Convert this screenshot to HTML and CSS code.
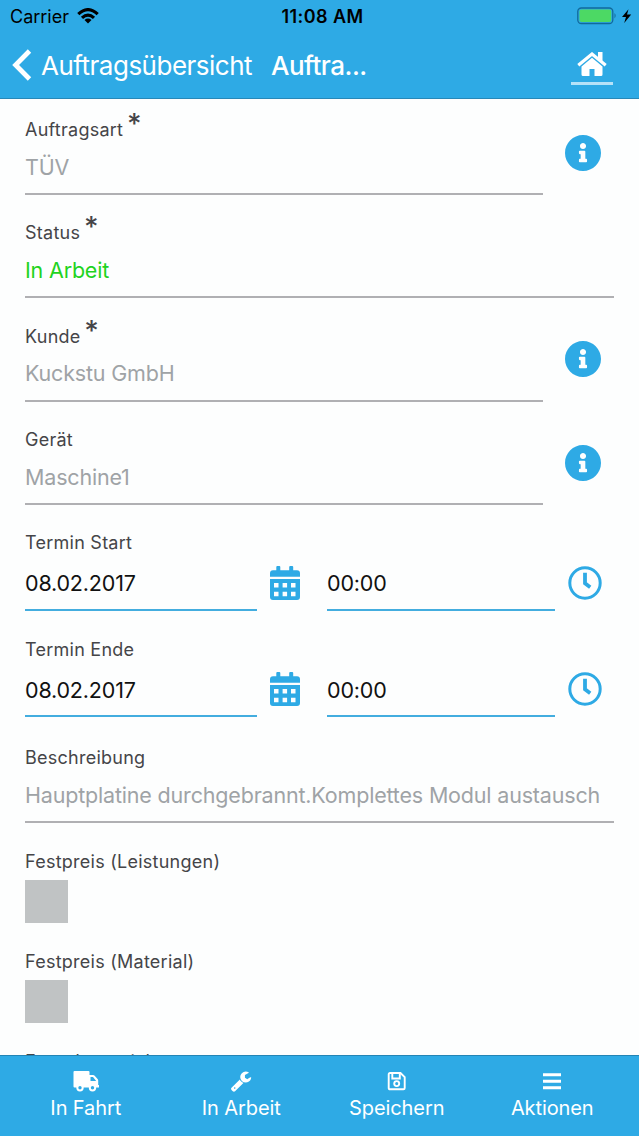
FILE: index.html
```html
<!DOCTYPE html>
<html lang="de">
<head>
  <meta charset="UTF-8">
  <meta name="viewport" content="width=device-width, initial-scale=1.0">
  <title>Auftrag</title>
  <link rel="stylesheet" href="styles.css">
</head>
<body>
  <svg class="sprite" width="0" height="0">
    <symbol id="info" viewBox="8 8 496 496">
      <path d="M256 8C119.043 8 8 119.083 8 256c0 136.997 111.043 248 248 248s248-111.003 248-248C504 119.083 392.957 8 256 8zm0 110c23.196 0 42 18.804 42 42s-18.804 42-42 42-42-18.804-42-42 18.804-42 42-42zm56 254c0 6.627-5.373 12-12 12h-88c-6.627 0-12-5.373-12-12v-24c0-6.627 5.373-12 12-12h12v-64h-12c-6.627 0-12-5.373-12-12v-24c0-6.627 5.373-12 12-12h64c6.627 0 12 5.373 12 12v100h12c6.627 0 12 5.373 12 12v24z"/>
    </symbol>
    <symbol id="calendar" viewBox="0 0 30 34">
      <path fill-rule="evenodd" d="M0 10.700V7.300Q0 4.300 3 4.300H6.300V1Q6.300 0 7.300 0H9.300Q10.300 0 10.300 1V4.300H19.200V1Q19.200 0 20.200 0H22.200Q23.200 0 23.200 1V4.300H27Q30 4.300 30 7.300V10.700ZM0 12.900H30V31Q30 34 27 34H3Q0 34 0 31ZM4 17V21.500H8.500V17ZM12.600 17V21.500H17.100V17ZM21 17V21.500H25.500V17ZM4 25.700V30.200H8.500V25.700ZM12.600 25.700V30.200H17.100V25.700ZM21 25.700V30.200H25.500V25.700Z"/>
    </symbol>
    <symbol id="clock" viewBox="0 0 34 34">
      <circle cx="17" cy="17" r="15.200" fill="none" stroke="currentColor" stroke-width="3"/>
      <path d="M17 6.700V17.300L22.200 21.200" fill="none" stroke="currentColor" stroke-width="3.800"/>
    </symbol>
  </svg>

  <div class="app">
    <header>
      <div class="statusbar">
        <div class="carrier">Carrier
          <svg width="22" height="16" viewBox="0 0 22 16">
            <g fill="none" stroke="#000" stroke-width="3.200">
              <path d="M1.300 6.100Q11-2.800 20.700 6.100"/>
              <path d="M5 9.900Q11 4.300 17 9.900"/>
            </g>
            <path d="M7.500 11.900Q11 9.100 14.500 11.900L11 15.500Z"/>
          </svg>
        </div>
        <div class="clock">11:08 AM</div>
        <div class="battery">
          <svg width="56" height="18" viewBox="0 0 56 18">
            <rect x=".8" y="1" width="35" height="15.500" rx="3.500" fill="none" stroke="#126a9b" stroke-width="1.300"/>
            <rect x="2.500" y="2.600" width="31.700" height="12.300" rx="2" fill="#4cd964"/>
            <path d="M37.500 6Q39.800 8.700 37.500 11.500Z" fill="#126a9b"/>
            <path d="M51.500 2.200L45 10H49L47.200 16L54.200 7.600H50Z"/>
          </svg>
        </div>
      </div>
      <nav>
        <a class="back">
          <svg width="20" height="32" viewBox="0 0 20 32"><path d="M17.500 2L3.600 16L17.500 30" fill="none" stroke="#fff" stroke-width="4.800"/></svg>
          <span>Auftragsübersicht</span>
        </a>
        <h1>Auftra...</h1>
        <a class="home">
          <svg width="30" height="24" viewBox="0 0 30 24">
            <path d="M1.300 13.200L15 2L28.700 13.200" fill="none" stroke="#fff" stroke-width="3.200"/>
            <path d="M21 0H25.500V9L21 5.800ZM15 5.800L25.500 14.400V22.500Q25.500 24 24 24H17.500V17H12.500V24H6Q4.500 24 4.500 22.500V14.400Z" fill="#fff"/>
          </svg>
        </a>
      </nav>
    </header>

    <main>
      <div class="field with-info first">
        <div class="input">
          <label>Auftragsart <sup>*</sup></label>
          <div class="value">TÜV</div>
        </div>
        <svg class="info"><use href="#info"/></svg>
      </div>
      <div class="field">
        <div class="input">
          <label>Status <sup>*</sup></label>
          <div class="value green">In Arbeit</div>
        </div>
      </div>
      <div class="field with-info">
        <div class="input">
          <label>Kunde <sup>*</sup></label>
          <div class="value">Kuckstu GmbH</div>
        </div>
        <svg class="info"><use href="#info"/></svg>
      </div>
      <div class="field with-info">
        <div class="input">
          <label>Gerät</label>
          <div class="value">Maschine1</div>
        </div>
        <svg class="info"><use href="#info"/></svg>
      </div>

      <div class="field date-field">
        <label>Termin Start</label>
        <div class="row">
          <div class="value date">08.02.2017</div>
          <svg class="calendar"><use href="#calendar"/></svg>
          <div class="value time">00:00</div>
          <svg class="time-icon"><use href="#clock"/></svg>
        </div>
      </div>
      <div class="field date-field">
        <label>Termin Ende</label>
        <div class="row">
          <div class="value date">08.02.2017</div>
          <svg class="calendar"><use href="#calendar"/></svg>
          <div class="value time">00:00</div>
          <svg class="time-icon"><use href="#clock"/></svg>
        </div>
      </div>

      <div class="field description">
        <div class="input">
          <label>Beschreibung</label>
          <div class="value">Hauptplatine durchgebrannt.Komplettes Modul austausch</div>
        </div>
      </div>
      <div class="field check-field">
        <label>Festpreis (Leistungen)</label>
        <div class="checkbox"></div>
      </div>
      <div class="field check-field">
        <label>Festpreis (Material)</label>
        <div class="checkbox"></div>
      </div>
      <div class="field check-field">
        <label>Fremdmaterial</label>
      </div>
    </main>

    <footer>
      <a>
        <svg width="26" height="22" viewBox="0 0 26 22">
          <path fill-rule="evenodd" d="M1.500 1H15.500Q16.500 1 16.500 2V5H20Q21 5 21.700 5.700L24.600 9Q25.200 9.700 25.200 10.500V15H26V17.500H1.500Q.5 17.500 .5 16.500V2Q.5 1 1.500 1ZM17.500 7V11H23.200L20 7Z"/>
          <g fill="#2eaae5" stroke="#fff" stroke-width="2"><circle cx="7" cy="17.700" r="2.700"/><circle cx="19.500" cy="17.700" r="2.700"/></g>
        </svg>
        <span>In Fahrt</span>
      </a>
      <a>
        <svg width="22" height="22" viewBox="0 0 1792 1792"><path d="M448 1472q0-26-19-45t-45-19-45 19-19 45 19 45 45 19 45-19 19-45zm644-420l-682 682q-37 37-90 37-52 0-91-37l-106-108q-38-36-38-90 0-53 38-91l681-681q39 98 114.500 173.500t173.500 114.500zm634-435q0 39-23 106-47 134-164.500 217.500t-258.500 83.500q-185 0-316.500-131.500t-131.500-316.500 131.500-316.500 316.500-131.500q58 0 121.500 16.500t107.500 46.500q16 11 16 28t-16 28l-293 169v224l193 107q5-3 79-48.500t135.500-81 70.500-35.500q15 0 23.500 10t8.500 25z"/></svg>
        <span>In Arbeit</span>
      </a>
      <a>
        <svg width="20" height="22" viewBox="0 0 20 22">
          <g fill="none" stroke="#fff" stroke-width="1.900">
            <path d="M3 3H13.500L17.700 7.200V18Q17.700 19.300 16.400 19.300H3Q1.700 19.300 1.700 18V4.300Q1.700 3 3 3Z"/>
            <path d="M5.300 3V8.500H12.800V3"/>
            <circle cx="9.700" cy="13.600" r="2.500"/>
          </g>
        </svg>
        <span>Speichern</span>
      </a>
      <a>
        <svg width="18" height="22" viewBox="0 0 18 22"><path d="M0 3.300H18V6.200H0ZM0 9.800H18V12.700H0ZM0 16.300H18V19.200H0Z"/></svg>
        <span>Aktionen</span>
      </a>
    </footer>
  </div>
</body>
</html>
```

FILE: styles.css
```css
* {
  box-sizing: border-box;
}

body {
  margin: 0;
  background-color: #fdfefe;
  font-family: Inter, "Liberation Sans", sans-serif;
}

svg {
  display: block;
  flex-shrink: 0;
}

.sprite {
  display: none;
}

.app {
  display: flex;
  flex-direction: column;
  height: 1136px;
  overflow: hidden;
}

header {
  flex-shrink: 0;
  height: 99px;
  background-color: #2eaae5;
  border-bottom: 1px solid #2888b8;
}

.statusbar {
  display: grid;
  grid-template-columns: 1fr auto 1fr;
  align-items: center;
  height: 32px;
  padding: 0 6px 0 10px;
  font-size: 18px;
  color: #000;
}

.carrier {
  display: flex;
  align-items: center;
  gap: 8px;
}

.clock {
  margin-left: 2px;
  font-weight: 600;
  letter-spacing: 0.4px;
}

.battery {
  justify-self: end;
}

nav {
  display: flex;
  align-items: center;
  height: 66px;
  padding: 0 26px 0 12px;
  color: #fff;
}

.back {
  display: flex;
  align-items: center;
  gap: 9px;
  width: 259px;
  font-size: 26px;
  letter-spacing: -0.5px;
}

h1 {
  margin: 0;
  font-size: 26px;
  font-weight: 500;
  letter-spacing: -0.5px;
}

.home {
  display: flex;
  justify-content: center;
  width: 42px;
  height: 35px;
  padding-top: 2px;
  margin-left: auto;
  margin-top: 5px;
  border-bottom: 3px solid #b5e2f8;
}

main {
  flex: 1;
  min-height: 0;
  overflow: hidden;
  padding: 0 25px;
}

.field {
  height: 103.4px;
  padding-top: 26px;
}

.first {
  height: 96.2px;
  padding-top: 19.2px;
}

.with-info {
  display: flex;
  gap: 22px;
}

.with-info .input {
  width: 518px;
}

.info {
  width: 36px;
  height: 36px;
  margin-top: 16.800px;
  fill: #2eaae5;
}

label {
  display: block;
  height: 24px;
  line-height: 24px;
  font-size: 18px;
  letter-spacing: 0.25px;
  color: #454548;
  white-space: nowrap;
}

sup {
  margin-left: -1.500px;
  font-size: 28px;
  font-weight: 500;
  line-height: 0;
  vertical-align: 2px;
}

.value {
  height: 53px;
  padding-top: 8.800px;
  border-bottom: 2px solid #b0b0b3;
  font-size: 21.500px;
  line-height: 32px;
  letter-spacing: -0.18px;
  color: #9fa3a6;
  white-space: nowrap;
  overflow: hidden;
}

.value.green {
  color: #1fd321;
}

.date-field {
  height: 106.4px;
}

.row {
  display: flex;
  height: 55.6px;
  color: #2eaae5;
  fill: #2eaae5;
}

.row .value {
  height: 55.6px;
  padding-top: 12px;
  border-color: #43addf;
  color: #111;
}

.date {
  width: 232px;
}

.time {
  width: 228px;
}

.calendar {
  width: 30px;
  height: 34px;
  margin: 10.500px 27.500px 0 12.500px;
}

.time-icon {
  width: 34px;
  height: 34px;
  margin: 10.500px 0 0 13px;
}

.description {
  height: 105.5px;
  padding-top: 28px;
}

.check-field {
  height: 100px;
}

.checkbox {
  width: 43px;
  height: 43px;
  margin-top: 6.500px;
  background-color: #c0c3c4;
}

footer {
  display: flex;
  flex-shrink: 0;
  height: 81px;
  padding: 14px 9px 0 8px;
  background-color: #2eaae5;
  border-top: 1px solid #2384b5;
}

footer a {
  display: flex;
  flex: 1 0 0;
  flex-direction: column;
  align-items: center;
  gap: 4px;
  color: #fff;
  fill: #fff;
  font-size: 20px;
  line-height: 24px;
  letter-spacing: -0.1px;
}
```
